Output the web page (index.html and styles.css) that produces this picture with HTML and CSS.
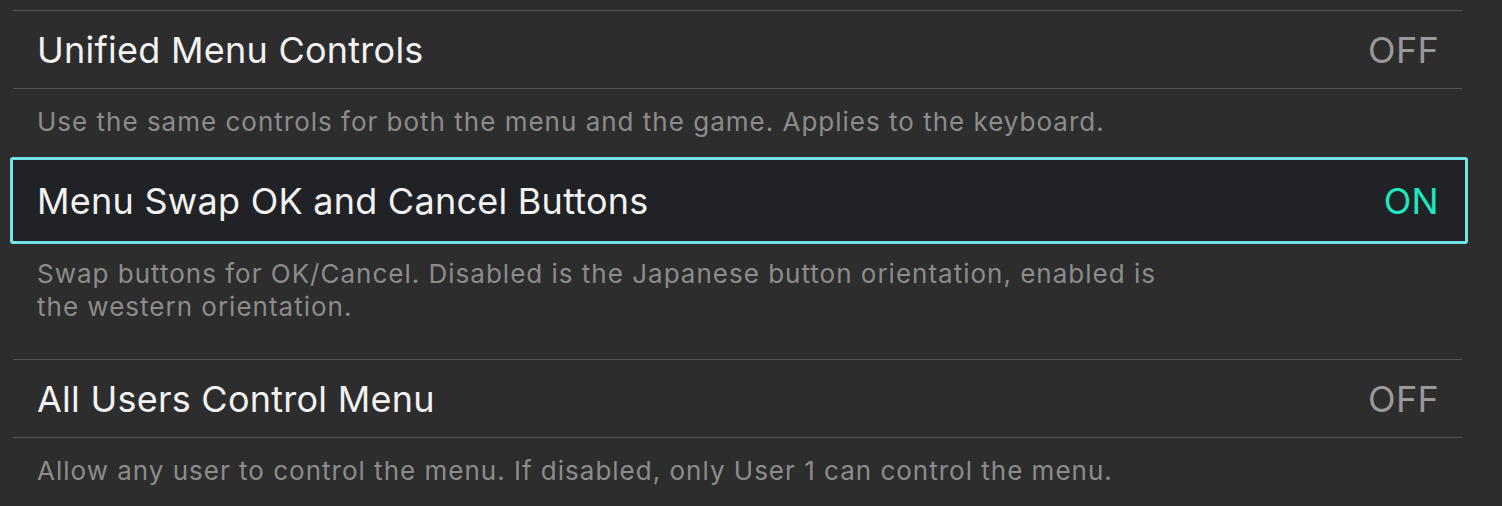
FILE: index.html
```html
<!DOCTYPE html>
<html lang="en">
<head>
  <meta charset="UTF-8" />
  <title>Controls Settings</title>
  <link rel="stylesheet" href="styles.css">
</head>
<body>
  <div class="settings">
    <div class="setting">
      <div class="row">
        <span class="label">Unified Menu Controls</span>
        <span class="value">OFF</span>
      </div>
      <p class="desc">Use the same controls for both the menu and the game. Applies to the keyboard.</p>
    </div>

    <div class="setting">
      <div class="row focused">
        <span class="label">Menu Swap OK and Cancel Buttons</span>
        <span class="value on">ON</span>
      </div>
      <p class="desc">Swap buttons for OK/Cancel. Disabled is the Japanese button orientation, enabled is the western orientation.</p>
    </div>

    <div class="setting">
      <div class="row">
        <span class="label">All Users Control Menu</span>
        <span class="value">OFF</span>
      </div>
      <p class="desc">Allow any user to control the menu. If disabled, only User 1 can control the menu.</p>
    </div>
  </div>
</body>
</html>
```

FILE: styles.css
```css
body {
  margin: 0;
  background: #2d2d2d;
  font-family: 'Inter', 'Noto Sans', sans-serif;
  overflow: hidden;
}
.settings {
  width: 1449px;
  margin: 10px 0 0 13px;
}
.row {
  display: flex;
  align-items: center;
  justify-content: space-between;
  height: 77px;
  padding: 0 23px 0 24px;
  border-top: 1px solid #555;
  border-bottom: 1px solid #555;
}
.row.focused {
  height: 81px;
  margin: 0 -6px 0 -3px;
  padding: 0 26px 0 24px;
  border: 3px solid #72e3e6;
  border-radius: 3px;
  background: #212226;
}
.label {
  color: #f2f2f2;
  font-size: 36px;
  letter-spacing: 0.25px;
}
.value {
  color: #999;
  font-size: 36px;
  letter-spacing: 0.3px;
}
.value.on {
  color: #1de8bf;
}
.desc {
  margin: 0;
  padding: 16px 0 0 24px;
  height: 52px;
  max-width: 1140px;
  color: #8c8c8c;
  font-size: 26px;
  letter-spacing: 1px;
  line-height: 33px;
}
.setting:nth-child(2) .desc {
  height: 102px;
  padding-top: 13px;
}
```
